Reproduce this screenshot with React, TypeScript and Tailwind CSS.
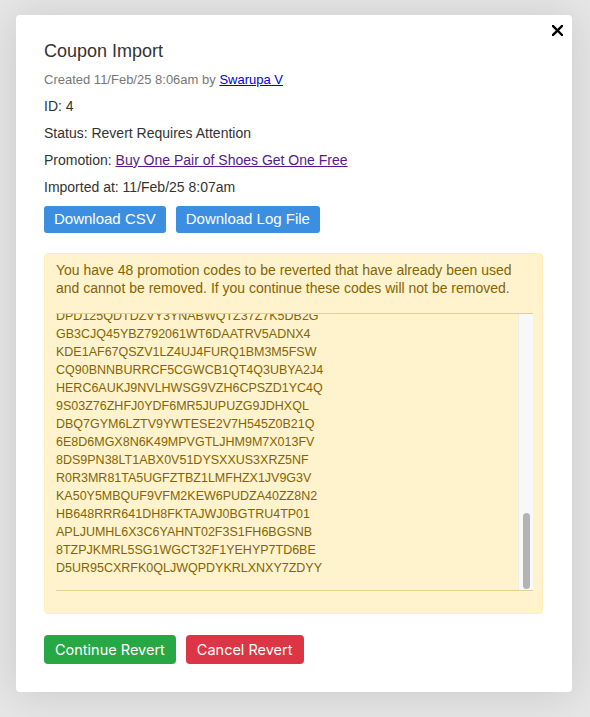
import React from "react";

const codes = [
  "DPD125QDTDZVY3YNABWQTZ37Z7K5DB2G",
  "GB3CJQ45YBZ792061WT6DAATRV5ADNX4",
  "KDE1AF67QSZV1LZ4UJ4FURQ1BM3M5FSW",
  "CQ90BNNBURRCF5CGWCB1QT4Q3UBYA2J4",
  "HERC6AUKJ9NVLHWSG9VZH6CPSZD1YC4Q",
  "9S03Z76ZHFJ0YDF6MR5JUPUZG9JDHXQL",
  "DBQ7GYM6LZTV9YWTESE2V7H545Z0B21Q",
  "6E8D6MGX8N6K49MPVGTLJHM9M7X013FV",
  "8DS9PN38LT1ABX0V51DYSXXUS3XRZ5NF",
  "R0R3MR81TA5UGFZTBZ1LMFHZX1JV9G3V",
  "KA50Y5MBQUF9VFM2KEW6PUDZA40ZZ8N2",
  "HB648RRR641DH8FKTAJWJ0BGTRU4TP01",
  "APLJUMHL6X3C6YAHNT02F3S1FH6BGSNB",
  "8TZPJKMRL5SG1WGCT32F1YEHYP7TD6BE",
  "D5UR95CXRFK0QLJWQPDYKRLXNXY7ZDYY",
];

export default function App() {
  return (
    <div className="min-h-[717px] bg-[#e6e6e6] pt-[15px] pl-[16px] font-['Liberation_Sans',Arial,sans-serif]">
      <div className="relative w-[556px] h-[677px] rounded-[4px] bg-white pl-[28px] pr-[29px] pt-[24px] shadow-[0_2px_40px_rgba(0,0,0,0.13)]">
        <button className="absolute right-[9px] top-[10px] w-[11px] h-[11px]" aria-label="close">
          <svg viewBox="0 0 11 11" width="11" height="11">
            <path d="M1 1 L10 10 M10 1 L1 10" stroke="#000" strokeWidth="2.4" strokeLinecap="square" />
          </svg>
        </button>
        <h1 className="text-[18px] leading-[24px] text-[#333]">Coupon Import</h1>
        <div className="mt-[8px] text-[13px] leading-[18px] text-[#777]">
          Created 11/Feb/25 8:06am by{" "}
          <a href="#" className="text-[#0000ee] underline">Swarupa V</a>
        </div>
        <div className="mt-[7px] text-[14px] leading-[20px] text-[#333]">ID: 4</div>
        <div className="mt-[7px] text-[14px] leading-[20px] text-[#333]">Status: Revert Requires Attention</div>
        <div className="mt-[7px] text-[14px] leading-[20px] text-[#333]">
          Promotion: <a href="#" className="text-[#551a8b] underline">Buy One Pair of Shoes Get One Free</a>
        </div>
        <div className="mt-[7px] text-[14px] leading-[20px] text-[#333]">Imported at: 11/Feb/25 8:07am</div>
        <div className="mt-[9px] flex gap-[10px]">
          <button className="h-[27px] rounded-[3px] bg-[#3b8ee0] px-[10px] text-[15px] text-white">Download CSV</button>
          <button className="h-[27px] rounded-[3px] bg-[#3b8ee0] px-[10px] text-[15px] text-white">Download Log File</button>
        </div>
        <div className="mt-[20px] h-[361px] rounded-[4px] border border-[#ffeeba] bg-[#fff3cd] pl-[11px] pr-[9px] pt-[8px] text-[#856404]">
          <p className="text-[14px] leading-[17.5px]">
            You have 48 promotion codes to be reverted that have already been used and cannot be removed. If you continue these codes will not be removed.
          </p>
          <div className="mt-[16px] flex h-[278px] border-y border-[#e2d08e]">
            <div className="flex-1 overflow-hidden">
              <div className="mt-[-7px] text-[12.5px] leading-[18px]">
                {codes.map((c) => (
                  <div key={c}>{c}</div>
                ))}
              </div>
            </div>
            <div className="flex w-[15px] flex-col border-l border-[#ededed] bg-[#f8f8f8] pt-[199px] pb-[1px] items-center">
              <div className="h-[76px] w-[7px] rounded-full bg-[#b3b3b3]" />
            </div>
          </div>
        </div>
        <div className="mt-[21px] flex gap-[10px] font-['Inter',sans-serif]">
          <button className="h-[29px] rounded-[4px] bg-[#28a745] px-[11px] text-[14.5px] text-white">Continue Revert</button>
          <button className="h-[29px] rounded-[4px] bg-[#dc3545] px-[11px] text-[14.5px] text-white">Cancel Revert</button>
        </div>
      </div>
    </div>
  );
}
